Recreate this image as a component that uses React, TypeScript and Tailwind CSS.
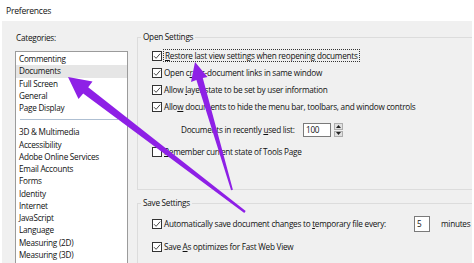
import React from "react";

const TOP = ["Commenting", "Documents", "Full Screen", "General", "Page Display"];
const REST = [
  "3D & Multimedia",
  "Accessibility",
  "Adobe Online Services",
  "Email Accounts",
  "Forms",
  "Identity",
  "Internet",
  "JavaScript",
  "Language",
  "Measuring (2D)",
  "Measuring (3D)",
];

function Check({ on = true }: { on?: boolean }) {
  return (
    <span className="flex h-[10px] w-[10px] shrink-0 items-center justify-center border border-[#333333] bg-white">
      {on && (
        <svg width="8" height="8" viewBox="0 0 8 8">
          <path d="M1 4.2 L3.1 6.3 L7.2 1.6" fill="none" stroke="#333333" strokeWidth="0.9" />
        </svg>
      )}
    </span>
  );
}

function Row({ children, on = true, tight = false }: { children: React.ReactNode; on?: boolean; tight?: boolean }) {
  return (
    <div className={`flex h-[17px] items-center ${tight ? "gap-0" : "gap-[2px]"}`}>
      <Check on={on} />
      <span className="whitespace-nowrap">{children}</span>
    </div>
  );
}

function Arrows() {
  // two purple callout arrows drawn over the dialog
  return (
    <svg className="pointer-events-none absolute left-0 top-0" width="474" height="263">
      <polygon
        fill="#8e20e6"
        points="68,77 92.5,81.5 88.2,87.2 245.7,211 244.3,213 83.2,93.6 78.5,99"
      />
      <polygon
        fill="#8e20e6"
        points="195,62 207.5,77 202.8,78 232.9,189.8 231.1,190.3 196.4,80 191,82"
      />
    </svg>
  );
}

export default function App() {
  return (
    <div className="relative h-[263px] w-[474px] overflow-hidden bg-white font-['Open_Sans',sans-serif] text-[8.2px] leading-[12px] tracking-[-0.25px] text-[#111111]">
      <div className="flex h-[21px] items-center pl-[6px] text-[8.6px]">Preferences</div>

      <div className="ml-[2px] flex h-[242px] w-[470px] overflow-hidden bg-[#f0f0f0]">
        {/* categories */}
        <div className="w-[135px] shrink-0 pl-[13px]">
          <div className="mt-[11px] pl-[1px]">Categories:</div>
          <div className="mt-[7px] h-[230px] w-[113px] border border-[#9b9b9b] bg-white pt-[1px]">
            {TOP.map((c) => (
              <div
                key={c}
                className={`h-[12.25px] pl-[3px] leading-[12.25px] ${c === "Documents" ? "bg-[#e6e6e6]" : ""}`}
              >
                {c}
              </div>
            ))}
            <div className="mx-[4px] mb-[6px] mt-[5px] h-px w-[98px] bg-[#aebfd2]" />
            {REST.map((c) => (
              <div key={c} className="h-[12.25px] pl-[3px] leading-[12.25px]">
                {c}
              </div>
            ))}
          </div>
        </div>

        {/* settings */}
        <div className="w-[340px] shrink-0">
          <fieldset className="mt-[10px] h-[159px] border border-[#dcdcdc]">
            <legend className="ml-[3px] px-[2px]">Open Settings</legend>
            <div className="pl-[14px] pt-[4px]">
              <Row tight>
                <span className="ml-px border border-dotted border-[#333333] px-[1px]">
                  <u>R</u>estore last view settings when reopening documents
                </span>
              </Row>
              <Row>
                Open c<u>r</u>oss-document links in same window
              </Row>
              <Row>
                Allow <u>l</u>ayer state to be set by user information
              </Row>
              <Row>
                Allo<u>w</u> documents to hide the menu bar, toolbars, and window controls
              </Row>
              <div className="mt-[8px] flex h-[14px] items-center pl-[29px]">
                <span className="w-[122px] whitespace-nowrap">
                  Documents in recently <u>u</u>sed list:
                </span>
                <div className="flex h-[14px] w-[28px] items-center border border-[#7a7a7a] bg-white pl-[2px]">
                  100
                </div>
                <div className="ml-[3px] flex h-[14px] w-[9px] flex-col gap-px">
                  <div className="flex h-[6.5px] items-center justify-center border border-[#adadad] bg-[#e1e1e1]">
                    <svg width="5" height="3" viewBox="0 0 5 3">
                      <path d="M0 3 L2.5 0 L5 3 Z" fill="#222" />
                    </svg>
                  </div>
                  <div className="flex h-[6.5px] items-center justify-center border border-[#adadad] bg-[#e1e1e1]">
                    <svg width="5" height="3" viewBox="0 0 5 3">
                      <path d="M0 0 L2.5 3 L5 0 Z" fill="#222" />
                    </svg>
                  </div>
                </div>
              </div>
              <div className="mt-[6px]">
                <Row on={false}>
                  <u>R</u>emember current state of Tools Page
                </Row>
              </div>
            </div>
          </fieldset>

          <fieldset className="mt-[7px] h-[80px] border border-[#dcdcdc]">
            <legend className="ml-[3px] px-[2px]">Save Settings</legend>
            <div className="pl-[14px] pt-[6px]">
              <div className="flex h-[17px] items-center">
                <div className="flex w-[262px] items-center gap-[2px]">
                  <Check />
                  <span className="whitespace-nowrap">
                    Automatically save document changes to <u>t</u>emporary file every:
                  </span>
                </div>
                <div className="flex h-[16px] w-[16px] items-center border border-[#7a7a7a] bg-white pl-[2px]">
                  5
                </div>
                <span className="ml-[11px] whitespace-nowrap">minutes (</span>
              </div>
              <div className="mt-[6px]">
                <Row>
                  Save <u>A</u>s optimizes for Fast Web View
                </Row>
              </div>
            </div>
          </fieldset>
        </div>
      </div>

      <Arrows />
    </div>
  );
}
